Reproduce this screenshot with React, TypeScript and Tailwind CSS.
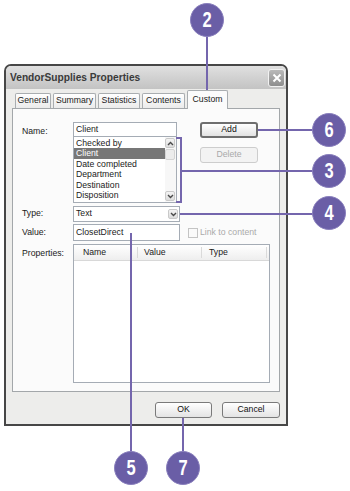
const ui = "font-['Liberation_Sans',Arial,sans-serif]";

function Chevron({ up }: { up?: boolean }) {
  return (
    <svg width="7" height="5" viewBox="0 0 7 5">
      <path
        d={up ? "M1 4 L3.5 1.5 L6 4" : "M1 1 L3.5 3.5 L6 1"}
        fill="none"
        stroke="#4a4a4a"
        strokeWidth="1.4"
      />
    </svg>
  );
}

function ArrowBox({ up }: { up?: boolean }) {
  return (
    <div className="w-[10px] h-[10px] rounded-[2px] border border-[#c9c9c9] bg-linear-to-b from-[#f4f4f4] to-[#dcdcdc] flex items-center justify-center">
      <Chevron up={up} />
    </div>
  );
}

function Btn({
  label,
  disabled,
  strong,
  w,
}: {
  label: string;
  disabled?: boolean;
  strong?: boolean;
  w: string;
}) {
  return (
    <div
      className={`${w} h-[16px] rounded-[3px] flex items-center justify-center text-[8.7px] ${
        disabled
          ? "border border-[#cdcdcd] bg-[#f3f3f3] text-[#a9a9a9]"
          : strong
            ? "border-2 border-[#6e6e6e] bg-linear-to-b from-[#ffffff] to-[#e2e2e2] text-[#111]"
            : "border border-[#7a7a7a] bg-linear-to-b from-[#ffffff] to-[#e4e4e4] text-[#111]"
      }`}
    >
      {label}
    </div>
  );
}

const items = [
  "Checked by",
  "Client",
  "Date completed",
  "Department",
  "Destination",
  "Disposition",
];

const tabs = [
  { label: "General", w: "w-[36px]" },
  { label: "Summary", w: "w-[43px]" },
  { label: "Statistics", w: "w-[42px]" },
  { label: "Contents", w: "w-[43px]" },
];

function Circle({ n, pos }: { n: number; pos: string }) {
  return (
    <div
      className={`absolute ${pos} w-[34px] h-[34px] rounded-full bg-[#6a5ea6] border border-[#8a80bd] flex items-center justify-center`}
    >
      <span className="text-white font-bold text-[22px] leading-none scale-x-[0.75]">
        {n}
      </span>
    </div>
  );
}

export default function App() {
  return (
    <div className={`${ui} relative w-[350px] h-[491px] bg-white overflow-hidden`}>
      {/* dialog */}
      <div className="ml-[4px] mt-[64px] w-[284px] h-[362px] border-2 border-[#474747] rounded-t-[7px] bg-[#ededeb] flex flex-col overflow-hidden">
        <div className="h-[23px] shrink-0 flex items-center justify-between bg-linear-to-b from-[#e0e0e0] to-[#c3c3c3] pl-[4px] pr-[1px]">
          <span className="font-bold text-[10.2px] text-[#3a3a3a]">
            VendorSupplies Properties
          </span>
          <div className="w-[17px] h-[18px] rounded-[3px] border border-[#f2f2f2] bg-linear-to-b from-[#b9b9b9] to-[#8e8e8e] flex items-center justify-center">
            <svg width="10" height="10" viewBox="0 0 10 10">
              <path d="M1.5 1.5 L8.5 8.5 M8.5 1.5 L1.5 8.5" stroke="#ffffff" strokeWidth="2" />
            </svg>
          </div>
        </div>

        <div className="flex-1 flex flex-col px-[6px]">
          {/* tabs */}
          <div className="h-[19px] flex items-end pl-[3px] gap-[2px]">
            {tabs.map((t) => (
              <div
                key={t.label}
                className={`${t.w} h-[15px] border border-b-0 border-[#a9adb0] rounded-t-[2px] bg-linear-to-b from-[#ffffff] to-[#ebebeb] text-[8.7px] text-[#222] flex items-center justify-center`}
              >
                {t.label}
              </div>
            ))}
            <div className="w-[41px] h-[19px] -mb-px relative z-10 border border-b-0 border-[#a9adb0] rounded-t-[2px] bg-[#fbfbfb] text-[8.7px] text-[#222] flex items-start justify-center pt-[2px]">
              Custom
            </div>
          </div>

          {/* panel */}
          <div className="h-[284px] border border-[#a3a7aa] bg-[#fbfbfb] pt-[13px] pl-[9px] flex flex-col text-[8.7px] text-[#1a1a1a]">
            {/* name */}
            <div className="flex h-[81px]">
              <div className="w-[51px] pt-[3px]">Name:</div>
              <div className="w-[104px] flex flex-col">
                <div className="h-[15px] border border-[#a5acb5] bg-white pl-[2px] flex items-center">
                  Client
                </div>
                <div className="h-[66px] border border-t-0 border-[#a5acb5] bg-white flex">
                  <div className="flex-1 pt-[0.5px]">
                    {items.map((it) => (
                      <div
                        key={it}
                        className={`h-[10.5px] leading-[10.5px] pl-[2px] ${
                          it === "Client" ? "bg-[#777777] text-white" : ""
                        }`}
                      >
                        {it}
                      </div>
                    ))}
                  </div>
                  <div className="w-[11px] flex flex-col pt-[1px] pb-[1px] bg-[#f7f7f7]">
                    <ArrowBox up />
                    <div className="h-[11px] w-[10px] mt-[1px] rounded-[2px] border border-[#d4d4d4] bg-[#ececec]" />
                    <div className="flex-1" />
                    <ArrowBox />
                  </div>
                </div>
              </div>
              <div className="ml-[23px] flex flex-col gap-[9px]">
                <Btn label="Add" strong w="w-[58px]" />
                <Btn label="Delete" disabled w="w-[58px]" />
              </div>
            </div>

            {/* type */}
            <div className="flex mt-[3px] h-[16px] items-center">
              <div className="w-[51px]">Type:</div>
              <div className="w-[107px] h-[16px] border border-[#a5acb5] bg-white pl-[2px] pr-[1px] flex items-center justify-between">
                <span>Text</span>
                <ArrowBox />
              </div>
            </div>

            {/* value */}
            <div className="flex mt-[2px] h-[17px] items-center">
              <div className="w-[51px]">Value:</div>
              <div className="w-[107px] h-[17px] border border-[#a5acb5] bg-white pl-[2px] flex items-center">
                ClosetDirect
              </div>
              <div className="ml-[8px] w-[10px] h-[10px] border border-[#c4c4c4] bg-[#fafafa]" />
              <span className="ml-[2px] text-[#aaaaaa]">Link to content</span>
            </div>

            {/* properties */}
            <div className="flex mt-[3px]">
              <div className="w-[51px] pt-[3px]">Properties:</div>
              <div className="w-[197px] h-[139px] border border-[#a5acb5] bg-white flex flex-col">
                <div className="h-[16px] flex items-center bg-linear-to-b from-[#ffffff] to-[#eeeeee] border-b border-[#d8d8d8]">
                  <div className="w-[64px] pl-[9px] border-r border-[#dadada] h-[11px] leading-[11px]">Name</div>
                  <div className="w-[64px] pl-[6px] border-r border-[#dadada] h-[11px] leading-[11px]">Value</div>
                  <div className="w-[65px] pl-[7px] border-r border-[#dadada] h-[11px] leading-[11px]">Type</div>
                </div>
              </div>
            </div>
          </div>

          {/* buttons */}
          <div className="mt-[10px] flex justify-end gap-[10px]">
            <Btn label="OK" w="w-[57px]" />
            <Btn label="Cancel" w="w-[58px]" />
          </div>
        </div>
      </div>

      {/* callout lines */}
      <div className="absolute left-[206px] top-[36px] w-[2px] h-[61px] bg-[#7466ad]" />
      <div className="absolute left-[258px] top-[129px] w-[56px] h-[2px] bg-[#7466ad]" />
      <div className="absolute left-[180px] top-[137px] w-[2px] h-[66px] bg-[#7466ad]" />
      <div className="absolute left-[176px] top-[137px] w-[6px] h-[2px] bg-[#7466ad]" />
      <div className="absolute left-[176px] top-[201px] w-[6px] h-[2px] bg-[#7466ad]" />
      <div className="absolute left-[182px] top-[170px] w-[132px] h-[2px] bg-[#7466ad]" />
      <div className="absolute left-[180px] top-[213px] w-[134px] h-[2px] bg-[#7466ad]" />
      <div className="absolute left-[130px] top-[233px] w-[2px] h-[220px] bg-[#7466ad]" />
      <div className="absolute left-[182px] top-[418px] w-[2px] h-[35px] bg-[#7466ad]" />

      <Circle n={2} pos="left-[190px] top-[3px]" />
      <Circle n={6} pos="left-[312px] top-[113px]" />
      <Circle n={3} pos="left-[312px] top-[154px]" />
      <Circle n={4} pos="left-[312px] top-[196px]" />
      <Circle n={5} pos="left-[114px] top-[451px]" />
      <Circle n={7} pos="left-[166px] top-[451px]" />
    </div>
  );
}
